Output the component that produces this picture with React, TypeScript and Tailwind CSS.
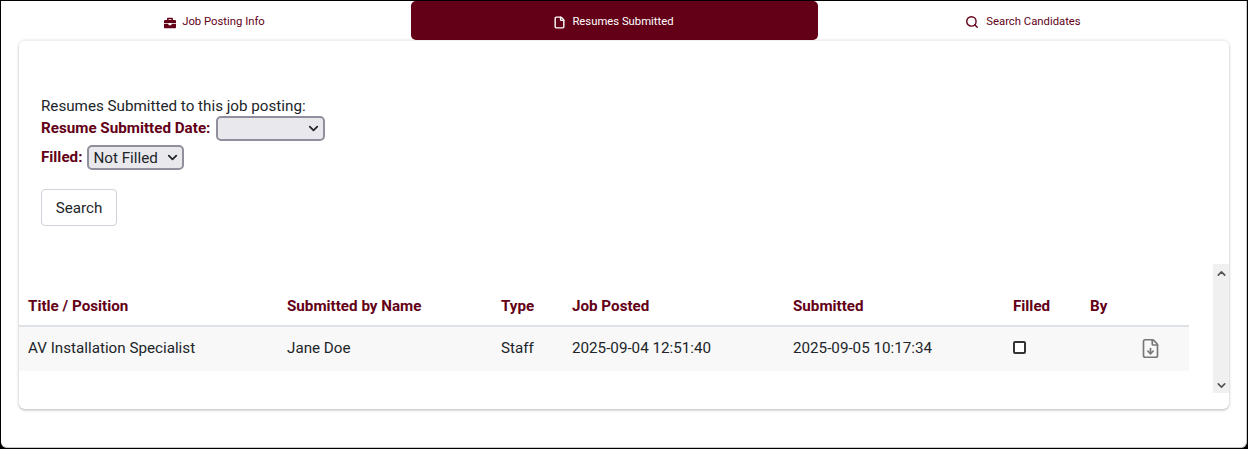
import React from 'react';
import { FaBriefcase } from 'react-icons/fa';
import { File, FileDown, Search, ChevronUp, ChevronDown } from 'lucide-react';

const columns = ['Title / Position', 'Submitted by Name', 'Type', 'Job Posted', 'Submitted', 'Filled', 'By', ''];

export default function App() {
  return (
    <div className="h-[449px] bg-black p-[1px] overflow-hidden font-['Roboto',sans-serif]">
      <div className="h-full bg-white border-b border-r border-[#c8c8c8] rounded-b-[6px] pl-[18px] pr-[17px] text-[#212529]">
        <div className="grid grid-cols-[392px_407px_411px] h-[39px] text-[11.3px] text-[#630017]">
          <div className="flex items-center justify-center gap-[6px] pt-[4px] pr-[1px]">
            <FaBriefcase size={12} />
            Job Posting Info
          </div>
          <div className="flex items-center justify-center gap-[6px] pt-[4px] pr-[2px] bg-[#630017] text-white rounded-[5px]">
            <File size={13} strokeWidth={2.6} />
            Resumes Submitted
          </div>
          <div className="flex items-center justify-center gap-[7px] pt-[4px] pr-[1px]">
            <Search size={14} strokeWidth={2.4} className="mb-[2px]" />
            Search Candidates
          </div>
        </div>

        <div className="h-[369px] rounded-[6px] border-t border-[#f0f0f0] shadow-[0_1px_3px_rgba(0,0,0,0.3)]">
          <div className="px-[22px] pt-[55px] h-[223px] text-[15.2px]">
            <div className="leading-[20px]">Resumes Submitted to this job posting:</div>
            <div className="flex items-center gap-[6px] h-[25px]">
              <label className="font-bold text-[#630017]">Resume Submitted Date:</label>
              <span className="relative">
                <select className="block appearance-none w-[109px] h-[25px] bg-[#e9e9ed] border-2 border-[#8f8f9d] rounded-[5px]" />
                <ChevronDown size={15} strokeWidth={2.8} className="absolute right-[4px] top-[5px] pointer-events-none" />
              </span>
            </div>
            <div className="flex items-center gap-[5px] h-[25px] mt-[4px]">
              <label className="font-bold text-[#630017]">Filled:</label>
              <span className="relative">
                <select className="block appearance-none w-[97px] h-[25px] bg-[#e9e9ed] border-2 border-[#8f8f9d] rounded-[5px] pl-[4px]">
                  <option>Not Filled</option>
                </select>
                <ChevronDown size={15} strokeWidth={2.8} className="absolute right-[4px] top-[5px] pointer-events-none" />
              </span>
            </div>
            <button className="mt-[19px] h-[37px] w-[76px] pt-[1px] bg-white border border-[#ced4da] rounded-[4px]">Search</button>
          </div>

          <div className="flex h-[129px] text-[15.2px]">
            <div className="w-[1170px] pt-[29px]">
              <table className="w-full table-fixed border-collapse text-left">
                <colgroup>
                  <col className="w-[258px]" />
                  <col className="w-[214px]" />
                  <col className="w-[71px]" />
                  <col className="w-[221px]" />
                  <col className="w-[220px]" />
                  <col className="w-[77px]" />
                  <col className="w-[53px]" />
                  <col className="w-[56px]" />
                </colgroup>
                <thead>
                  <tr className="h-[33px] border-b-2 border-[#dee2e6] text-[#630017]">
                    {columns.map((c, i) => (
                      <th key={i} className={`${i === 0 ? 'pl-[9px]' : 'pl-[10px]'} pb-[5px] font-bold align-middle`}>{c}</th>
                    ))}
                  </tr>
                </thead>
                <tbody>
                  <tr className="h-[45px] bg-[#f8f8f8]">
                    <td className="pl-[9px] pb-[2px]">AV Installation Specialist</td>
                    <td className="pl-[10px] pb-[2px]">Jane Doe</td>
                    <td className="pl-[10px] pb-[2px]">Staff</td>
                    <td className="pl-[10px] pb-[2px]">2025-09-04 12:51:40</td>
                    <td className="pl-[10px] pb-[2px]">2025-09-05 10:17:34</td>
                    <td className="pl-[10px] pb-[2px]">
                      <input type="checkbox" className="block appearance-none w-[13px] h-[13px] mb-[2px] border-2 border-[#333] rounded-[2px] bg-white" />
                    </td>
                    <td className="pl-[10px]"></td>
                    <td className="pl-[7px] pb-[2px] text-[#777]">
                      <FileDown size={21} strokeWidth={1.9} />
                    </td>
                  </tr>
                </tbody>
              </table>
            </div>
            <div className="ml-[24px] w-[16px] bg-[#f0f0f0] flex flex-col items-center justify-between pt-[3px] pb-[1px] text-[#555]">
              <ChevronUp size={13} strokeWidth={3} />
              <ChevronDown size={13} strokeWidth={3} />
            </div>
          </div>
        </div>
      </div>
    </div>
  );
}
